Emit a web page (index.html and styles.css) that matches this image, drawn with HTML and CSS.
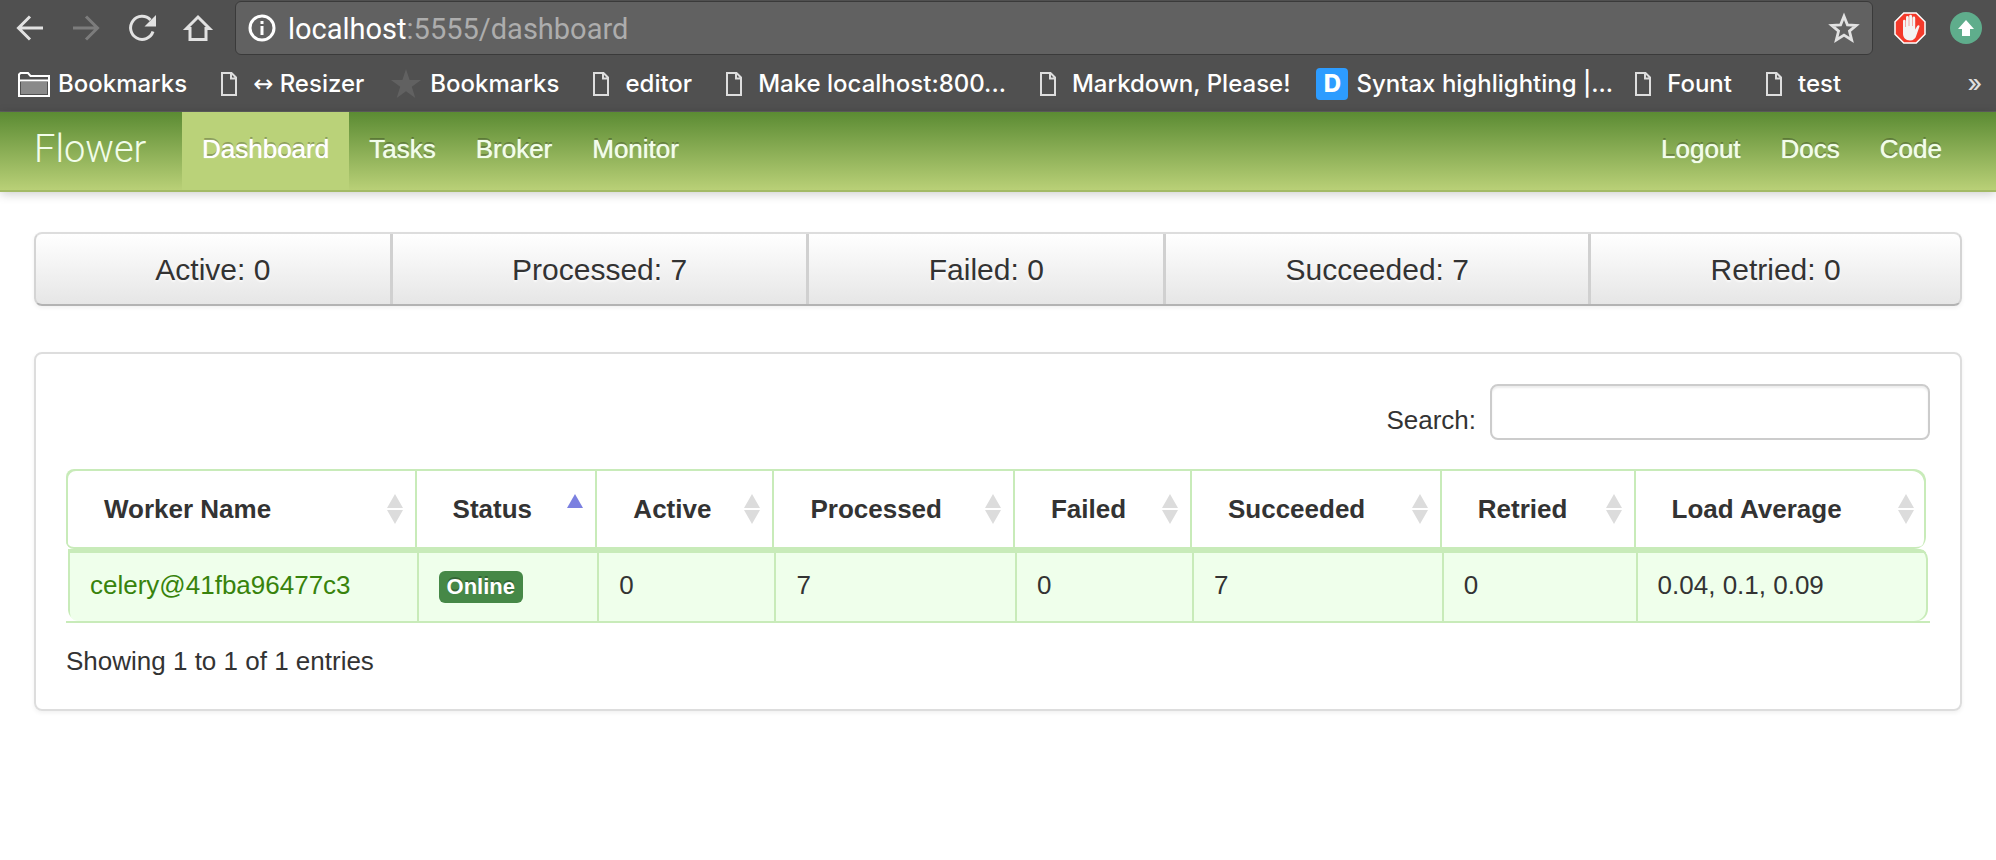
FILE: index.html
```html
<!DOCTYPE html>
<html lang="en">
<head>
<meta charset="utf-8">
<title>Flower</title>
<link rel="stylesheet" href="styles.css">
</head>
<body>
<svg class="symbols" aria-hidden="true">
  <symbol id="page" viewBox="0 0 32 32"><path d="M9 5h9.500L23 9.500V27H9zM18 5v5.500h5" fill="none" stroke="#dedede" stroke-width="2"/></symbol>
  <symbol id="sort" viewBox="0 0 16 30"><path d="M8 0l8 14H0zM0 16h16L8 30z" fill="#dcdcdc"/></symbol>
  <symbol id="sort-up" viewBox="0 0 16 30"><path d="M8 0l8 14H0z" fill="#7b80e0"/></symbol>
</svg>

<div class="browser">
  <div class="toolbar">
    <button class="tool" aria-label="Back"><svg viewBox="0 0 32 32"><path d="M29 16H5M16 4.500L4.500 16 16 27.500" fill="none" stroke="#e2e2e2" stroke-width="3"/></svg></button>
    <button class="tool" aria-label="Forward"><svg viewBox="0 0 32 32"><path d="M3 16h24M16 4.500L27.500 16 16 27.500" fill="none" stroke="#7c7c7c" stroke-width="3"/></svg></button>
    <button class="tool" aria-label="Reload"><svg viewBox="0 0 32 32"><path d="M27 19.500A11.500 11.500 0 1 1 24.500 8" fill="none" stroke="#e2e2e2" stroke-width="3"/><path d="M30 3v11.500H18.500z" fill="#e2e2e2"/></svg></button>
    <button class="tool" aria-label="Home"><svg viewBox="0 0 32 32"><path d="M4.500 16.500L16 5l11.500 11.500H24v11H8v-11z" fill="none" stroke="#e2e2e2" stroke-width="3"/></svg></button>
    <div class="address">
      <button class="address-icon" aria-label="Site information"><svg viewBox="0 0 28 28"><circle cx="14" cy="14" r="12" fill="none" stroke="#fff" stroke-width="3"/><path d="M12.500 7h3v3h-3zM12.500 12h3v9h-3z" fill="#fff"/></svg></button>
      <span class="url"><b class="host">localhost</b>:5555/dashboard</span>
      <button class="address-icon address-star" aria-label="Bookmark this page"><svg viewBox="0 0 30 30"><path d="M15 4l3.200 8 8.300.500-6.400 5.400 2.100 8.300L15 21.600l-7.200 4.600 2.100-8.300-6.400-5.400 8.300-.5z" fill="none" stroke="#e2e2e2" stroke-width="2.600"/></svg></button>
    </div>
    <button class="extension" aria-label="Ad blocker"><svg viewBox="0 0 32 32"><path d="M9.800 1h12.400L31 9.800v12.400L22.200 31H9.800L1 22.200V9.800z" fill="#f43a2b" stroke="#fff" stroke-width="1.500"/><path d="M9 17V9a1.300 1.300 0 0 1 2.600 0v6h.4V5.500a1.400 1.400 0 0 1 2.800 0V14h.4V4.200a1.400 1.400 0 0 1 2.800 0V14h.4V6a1.400 1.400 0 0 1 2.800 0v11.500l2-3.500c1-1.400 2.800-.8 2.200.8L22.500 23c-1 3.600-3 5.500-6.500 5.500-4.500 0-7-3-7-7z" fill="#f4f4f4"/></svg></button>
    <button class="extension" aria-label="Upload"><svg viewBox="0 0 32 32"><circle cx="16" cy="16" r="16" fill="#5fad8c"/><path d="M16 8l8 9h-4v7h-8v-7H8z" fill="#fff"/></svg></button>
  </div>
  <nav class="bookmarks" aria-label="Bookmarks">
    <a class="bookmark" href="#"><svg viewBox="0 0 32 32"><path d="M1 27V6.500L2.500 5H10l2.500 3H31v20H1z" fill="none" stroke="#fff" stroke-width="2"/><path d="M1 12.500h30" stroke="#fff" stroke-width="2"/><path d="M3 14h26v12H3z" fill="#8a8a8a"/></svg>Bookmarks</a>
    <a class="bookmark" href="#"><svg><use href="#page"/></svg><span><span class="arrow">↔</span> Resizer</span></a>
    <a class="bookmark" href="#"><svg viewBox="0 0 32 32"><path d="M16 1l3.600 11H31l-9.200 6.700L25.300 30 16 23.200 6.700 30l3.500-11.300L1 12h11.400z" fill="#616161"/></svg>Bookmarks</a>
    <a class="bookmark" href="#"><svg><use href="#page"/></svg>editor</a>
    <a class="bookmark" href="#"><svg><use href="#page"/></svg>Make localhost:800...</a>
    <a class="bookmark" href="#"><svg><use href="#page"/></svg>Markdown, Please!</a>
    <a class="bookmark bookmark-tight" href="#"><span class="favicon">D</span>Syntax highlighting |...</a>
    <a class="bookmark" href="#"><svg><use href="#page"/></svg>Fount</a>
    <a class="bookmark" href="#"><svg><use href="#page"/></svg>test</a>
    <button class="more" aria-label="More bookmarks">»</button>
  </nav>
</div>

<header class="navbar">
  <a class="brand" href="#">Flower</a>
  <nav class="menu">
    <a class="menu-link active" href="#">Dashboard</a>
    <a class="menu-link" href="#">Tasks</a>
    <a class="menu-link" href="#">Broker</a>
    <a class="menu-link" href="#">Monitor</a>
  </nav>
  <nav class="menu menu-right">
    <a class="menu-link" href="#">Logout</a>
    <a class="menu-link" href="#">Docs</a>
    <a class="menu-link" href="#">Code</a>
  </nav>
</header>

<main class="content">
  <div class="stats">
    <a class="stat" href="#">Active: 0</a>
    <a class="stat" href="#">Processed: 7</a>
    <a class="stat" href="#">Failed: 0</a>
    <a class="stat" href="#">Succeeded: 7</a>
    <a class="stat" href="#">Retried: 0</a>
  </div>

  <section class="panel">
    <div class="filter">
      <label for="search">Search:</label>
      <input class="search" id="search" type="text">
    </div>
    <table class="workers">
      <colgroup>
        <col class="col-name"><col class="col-status"><col class="col-active"><col class="col-processed"><col class="col-failed"><col class="col-succeeded"><col class="col-retried"><col>
      </colgroup>
      <thead>
        <tr>
          <th scope="col"><span class="head">Worker Name<svg class="sort"><use href="#sort"/></svg></span></th>
          <th scope="col" aria-sort="ascending"><span class="head">Status<svg class="sort"><use href="#sort-up"/></svg></span></th>
          <th scope="col"><span class="head">Active<svg class="sort"><use href="#sort"/></svg></span></th>
          <th scope="col"><span class="head">Processed<svg class="sort"><use href="#sort"/></svg></span></th>
          <th scope="col"><span class="head">Failed<svg class="sort"><use href="#sort"/></svg></span></th>
          <th scope="col"><span class="head">Succeeded<svg class="sort"><use href="#sort"/></svg></span></th>
          <th scope="col"><span class="head">Retried<svg class="sort"><use href="#sort"/></svg></span></th>
          <th scope="col"><span class="head">Load Average<svg class="sort"><use href="#sort"/></svg></span></th>
        </tr>
      </thead>
      <tbody>
        <tr>
          <td><a class="worker" href="#">celery@41fba96477c3</a></td>
          <td><span class="label">Online</span></td>
          <td>0</td>
          <td>7</td>
          <td>0</td>
          <td>7</td>
          <td>0</td>
          <td>0.04, 0.1, 0.09</td>
        </tr>
      </tbody>
    </table>
    <p class="info">Showing 1 to 1 of 1 entries</p>
  </section>
</main>
</body>
</html>
```

FILE: styles.css
```css
* { box-sizing: border-box; }

body {
  margin: 0;
  background: #fff;
  color: #333;
  font: 26px/40px "Liberation Sans", Arial, sans-serif;
}

a { color: inherit; text-decoration: none; }

button {
  padding: 0;
  border: 0;
  background: none;
  color: inherit;
  font: inherit;
}

svg { display: block; flex: none; }

.symbols { position: absolute; width: 0; height: 0; }

/* Browser toolbar */
.browser {
  background: #505050;
  border-bottom: 1px solid #5e5e5e;
  color: #fff;
}

.toolbar {
  display: flex;
  align-items: center;
  gap: 24px;
  padding: 1px 14px 0;
}

.tool svg,
.extension svg { width: 32px; height: 32px; }

.address {
  display: flex;
  flex: 1;
  align-items: center;
  gap: 12px;
  height: 54px;
  margin: 0 -3px;
  padding: 0 12px;
  border: 1px solid #3a3a3a;
  border-radius: 6px;
  background: #616161;
}

.address-icon svg { width: 28px; height: 28px; }
.address-star svg { width: 32px; height: 32px; }

.url {
  flex: 1;
  padding-top: 2px;
  color: #adadad;
  font: 29px/40px Roboto, sans-serif;
}

.host { color: #fff; font-weight: 400; }

.bookmarks {
  display: flex;
  align-items: center;
  gap: 26px;
  height: 56px;
  padding: 1px 14px 0 18px;
  font: 500 24px/32px Inter, sans-serif;
  white-space: nowrap;
}

.bookmark { display: flex; align-items: center; gap: 8px; }
.bookmark svg { width: 32px; height: 32px; }
.bookmark-tight { margin-right: -12px; }
.arrow { font-family: "DejaVu Sans", sans-serif; font-weight: 400; line-height: 24px; }

.favicon {
  width: 32px;
  border-radius: 4px;
  background: #2d9cff;
  font-weight: 800;
  text-align: center;
}

.more { margin-left: auto; color: #dedede; }

/* Application bar */
.navbar {
  display: flex;
  height: 80px;
  padding: 0 34px;
  border-bottom: 2px solid #a3ba66;
  background: linear-gradient(#5b8b33, #b9d077);
  box-shadow: 0 2px 10px rgba(0, 0, 0, .2);
  color: #f2fdea;
}

.brand {
  width: 148px;
  font: 300 38px/74px Roboto, sans-serif;
}

.menu { display: flex; }
.menu-right { margin-left: auto; }

.menu-link {
  padding: 0 20px;
  line-height: 74px;
  text-shadow: 0 0 1px currentColor, 0 -2px 0 rgba(0, 0, 0, .25);
}

.active { background: #bad279; color: #fff; }

/* Page */
.content { padding: 40px 34px; }

.stats {
  display: flex;
  margin-bottom: 46px;
  border: 2px solid #d4d4d4;
  border-top-color: #ddd;
  border-bottom-color: #b3b3b3;
  border-radius: 8px;
  background: linear-gradient(#fff, #e6e6e6);
  box-shadow: 0 2px 4px rgba(0, 0, 0, .06);
  font-size: 30px;
}

.stat {
  flex: 1 1 auto;
  padding: 16px 0 14px;
  text-align: center;
  text-shadow: 0 2px 2px rgba(255, 255, 255, .75);
}

.stat:not(:last-child) { border-right: 3px solid #d0d0d0; }

.panel {
  padding: 30px 30px 28px;
  border: 2px solid #ddd;
  border-radius: 8px;
  box-shadow: 0 2px 4px rgba(0, 0, 0, .06);
}

.filter {
  display: flex;
  justify-content: flex-end;
  align-items: flex-end;
  gap: 14px;
  margin-bottom: 29px;
}

.search {
  width: 440px;
  height: 56px;
  padding: 8px 12px;
  border: 2px solid #ccc;
  border-radius: 8px;
  box-shadow: inset 0 2px 2px rgba(0, 0, 0, .075);
  color: inherit;
  font: inherit;
}

.workers {
  width: 100%;
  border-bottom: 2px solid #c8ebb9;
  border-spacing: 0;
  table-layout: fixed;
  text-align: left;
}

.col-name { width: 18.7%; }
.col-status { width: 9.7%; }
.col-active { width: 9.5%; }
.col-processed { width: 12.9%; }
.col-failed { width: 9.5%; }
.col-succeeded { width: 13.4%; }
.col-retried { width: 10.4%; }

th {
  padding: 20px 12px 20px 38px;
  box-shadow: inset 2px 2px 0 #c8ebb9, inset 0 -2px 0 #c8ebb9;
}

th:first-child { border-radius: 8px 0 0 8px; }

th:last-child {
  border-right: 4px solid transparent;
  border-radius: 0 12px 12px 0;
  box-shadow: inset -2px 2px 0 #c8ebb9, inset 2px -2px 0 #c8ebb9;
}

.head { display: flex; align-items: center; justify-content: space-between; }
.sort { width: 16px; height: 30px; }

td {
  padding: 16px 10px 16px 24px;
  background:
    linear-gradient(#c8ebb9, #c8ebb9) 0 0 / 100% 4px no-repeat,
    linear-gradient(#c8ebb9, #c8ebb9) 2px 0 / 2px 100% no-repeat,
    #efffeb;
}

td:first-child {
  padding-left: 22px;
  border-left: 2px solid transparent;
  border-radius: 0 0 0 12px;
  background: #efffeb padding-box;
  box-shadow: inset 2px 4px 0 #c8ebb9;
}

td:last-child {
  border-right: 2px solid transparent;
  border-radius: 0 10px 12px 0;
  background-clip: padding-box;
  box-shadow: inset -2px 0 0 #c8ebb9;
}

.worker { color: #38830c; }

.label {
  display: inline-block;
  padding: 0 8px;
  border-radius: 6px;
  background: #468847;
  color: #fff;
  font-size: 22px;
  font-weight: 700;
  line-height: 32px;
  text-shadow: 0 -2px 0 rgba(0, 0, 0, .25);
}

.info { margin: 18px 0 0; }
```
